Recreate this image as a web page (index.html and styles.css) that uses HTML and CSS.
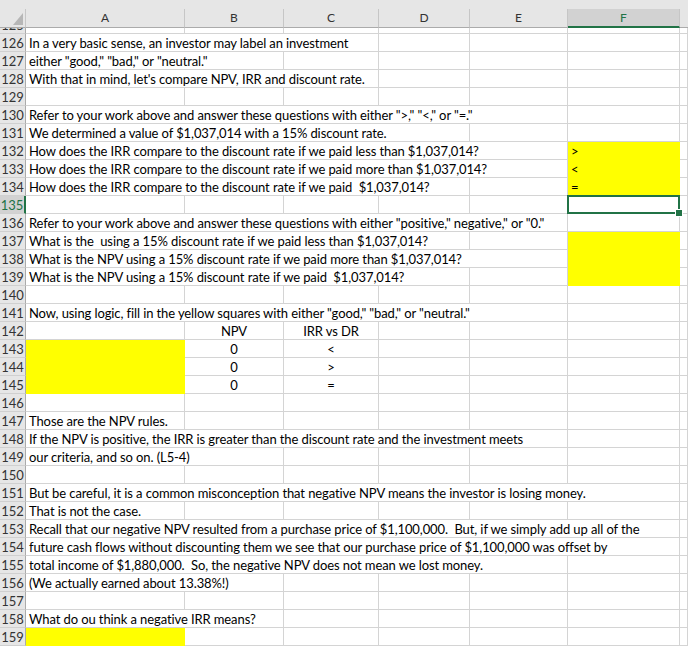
FILE: index.html
```html
<!DOCTYPE html>
<html>
<head>
<meta charset="utf-8">
<link rel="stylesheet" href="styles.css">
</head>
<body>
<div class="sheet">
  <div class="topband"></div>
  <div class="hdr">
    <div class="corner"><svg class="tri" width="10" height="12" viewBox="0 0 10 12"><polygon points="10,0 10,12 0,12" fill="#b6b6b6"/></svg></div>
    <div class="ch">A</div><div class="ch">B</div><div class="ch">C</div><div class="ch">D</div><div class="ch">E</div><div class="ch sel">F</div><div class="ch rest"></div>
  </div>
  <div class="rows">
    <div class="row first"><div class="rn">125</div><div class="c"></div><div class="c"></div><div class="c"></div><div class="c"></div><div class="c"></div><div class="c"></div><div class="c"></div></div>
    <div class="row"><div class="rn">126</div><div class="c s3">In a very basic sense, an investor may label an investment</div><div class="c"></div><div class="c"></div><div class="c"></div><div class="c"></div></div>
    <div class="row"><div class="rn">127</div><div class="c s2">either "good," "bad," or "neutral."</div><div class="c"></div><div class="c"></div><div class="c"></div><div class="c"></div><div class="c"></div></div>
    <div class="row"><div class="rn">128</div><div class="c s3">With that in mind, let's compare NPV, IRR and discount rate.</div><div class="c"></div><div class="c"></div><div class="c"></div><div class="c"></div></div>
    <div class="row"><div class="rn">129</div><div class="c"></div><div class="c"></div><div class="c"></div><div class="c"></div><div class="c"></div><div class="c"></div><div class="c"></div></div>
    <div class="row"><div class="rn">130</div><div class="c s5">Refer to your work above and answer these questions with either "&gt;," "&lt;," or "=."</div><div class="c"></div><div class="c"></div></div>
    <div class="row"><div class="rn">131</div><div class="c s4">We determined a value of $1,037,014 with a 15% discount rate.</div><div class="c"></div><div class="c"></div><div class="c"></div></div>
    <div class="row"><div class="rn">132</div><div class="c s5">How does the IRR compare to the discount rate if we paid less than $1,037,014?</div><div class="c y">&gt;</div><div class="c"></div></div>
    <div class="row"><div class="rn">133</div><div class="c s5">How does the IRR compare to the discount rate if we paid more than $1,037,014?</div><div class="c y">&lt;</div><div class="c"></div></div>
    <div class="row"><div class="rn">134</div><div class="c s4">How does the IRR compare to the discount rate if we paid&nbsp; $1,037,014?</div><div class="c"></div><div class="c y">=</div><div class="c"></div></div>
    <div class="row"><div class="rn cur">135</div><div class="c"></div><div class="c"></div><div class="c"></div><div class="c"></div><div class="c"></div><div class="c active"><span class="selbox"></span><span class="handle"></span></div><div class="c"></div></div>
    <div class="row"><div class="rn">136</div><div class="c s5">Refer to your work above and answer these questions with either "positive," negative," or "0."</div><div class="c"></div><div class="c"></div></div>
    <div class="row"><div class="rn">137</div><div class="c s4">What is the&nbsp; using a 15% discount rate if we paid less than $1,037,014?</div><div class="c"></div><div class="c y"></div><div class="c"></div></div>
    <div class="row"><div class="rn">138</div><div class="c s5">What is the NPV using a 15% discount rate if we paid more than $1,037,014?</div><div class="c y"></div><div class="c"></div></div>
    <div class="row"><div class="rn">139</div><div class="c s4">What is the NPV using a 15% discount rate if we paid&nbsp; $1,037,014?</div><div class="c"></div><div class="c y"></div><div class="c"></div></div>
    <div class="row"><div class="rn">140</div><div class="c"></div><div class="c"></div><div class="c"></div><div class="c"></div><div class="c"></div><div class="c"></div><div class="c"></div></div>
    <div class="row"><div class="rn">141</div><div class="c s5">Now, using logic, fill in the yellow squares with either "good," "bad," or "neutral."</div><div class="c"></div><div class="c"></div></div>
    <div class="row"><div class="rn">142</div><div class="c"></div><div class="c ctr">NPV</div><div class="c ctr">IRR vs DR</div><div class="c"></div><div class="c"></div><div class="c"></div><div class="c"></div></div>
    <div class="row"><div class="rn">143</div><div class="c y"></div><div class="c ctr">0</div><div class="c ctr">&lt;</div><div class="c"></div><div class="c"></div><div class="c"></div><div class="c"></div></div>
    <div class="row"><div class="rn">144</div><div class="c y"></div><div class="c ctr">0</div><div class="c ctr">&gt;</div><div class="c"></div><div class="c"></div><div class="c"></div><div class="c"></div></div>
    <div class="row"><div class="rn">145</div><div class="c y"></div><div class="c ctr">0</div><div class="c ctr">=</div><div class="c"></div><div class="c"></div><div class="c"></div><div class="c"></div></div>
    <div class="row"><div class="rn">146</div><div class="c"></div><div class="c"></div><div class="c"></div><div class="c"></div><div class="c"></div><div class="c"></div><div class="c"></div></div>
    <div class="row"><div class="rn">147</div><div class="c">Those are the NPV rules.</div><div class="c"></div><div class="c"></div><div class="c"></div><div class="c"></div><div class="c"></div><div class="c"></div></div>
    <div class="row"><div class="rn">148</div><div class="c s5">If the NPV is positive, the IRR is greater than the discount rate and the investment meets</div><div class="c"></div><div class="c"></div></div>
    <div class="row"><div class="rn">149</div><div class="c s2">our criteria, and so on. (L5-4)</div><div class="c"></div><div class="c"></div><div class="c"></div><div class="c"></div><div class="c"></div></div>
    <div class="row"><div class="rn">150</div><div class="c"></div><div class="c"></div><div class="c"></div><div class="c"></div><div class="c"></div><div class="c"></div><div class="c"></div></div>
    <div class="row"><div class="rn">151</div><div class="c s6">But be careful, it is a common misconception that negative NPV means the investor is losing money.</div><div class="c"></div></div>
    <div class="row"><div class="rn">152</div><div class="c">That is not the case.</div><div class="c"></div><div class="c"></div><div class="c"></div><div class="c"></div><div class="c"></div><div class="c"></div></div>
    <div class="row"><div class="rn">153</div><div class="c s6">Recall that our negative NPV resulted from a purchase price of $1,100,000.&nbsp; But, if we simply add up all of the</div><div class="c"></div></div>
    <div class="row"><div class="rn">154</div><div class="c s6">future cash flows without discounting them we see that our purchase price of $1,100,000 was offset by</div><div class="c"></div></div>
    <div class="row"><div class="rn">155</div><div class="c s5">total income of $1,880,000.&nbsp; So, the negative NPV does not mean we lost money.</div><div class="c"></div><div class="c"></div></div>
    <div class="row"><div class="rn">156</div><div class="c s2">(We actually earned about 13.38%!)</div><div class="c"></div><div class="c"></div><div class="c"></div><div class="c"></div><div class="c"></div></div>
    <div class="row"><div class="rn">157</div><div class="c"></div><div class="c"></div><div class="c"></div><div class="c"></div><div class="c"></div><div class="c"></div><div class="c"></div></div>
    <div class="row"><div class="rn">158</div><div class="c s2">What do ou think a negative IRR means?</div><div class="c"></div><div class="c"></div><div class="c"></div><div class="c"></div><div class="c"></div></div>
    <div class="row"><div class="rn">159</div><div class="c y"></div><div class="c"></div><div class="c"></div><div class="c"></div><div class="c"></div><div class="c"></div><div class="c"></div></div>
  </div>
</div>
</body>
</html>
```

FILE: styles.css
```css
html, body {
  margin: 0;
  padding: 0;
  background: #ffffff;
}
body {
  font-family: Lato, "Liberation Sans", sans-serif;
  color: #000000;
}
.sheet {
  width: 688px;
  height: 646px;
  overflow: hidden;
  display: flex;
  flex-direction: column;
}
.topband {
  height: 9px;
  flex: none;
  background: #e6e6e6;
}
.hdr {
  flex: none;
  display: grid;
  grid-template-columns: 26px 159px 99px 95px 91px 98px 112px 1fr;
  height: 18px;
  background: #e6e6e6;
  position: relative;
  z-index: 2;
}
.corner {
  box-sizing: border-box;
  border-right: 1px solid #c6c6c6;
  border-bottom: 1px solid #ababab;
  display: flex;
  justify-content: flex-end;
  align-items: flex-end;
  padding: 0 2px 2px 0;
}
.ch {
  box-sizing: border-box;
  border-right: 1px solid #c6c6c6;
  border-bottom: 1px solid #ababab;
  text-align: center;
  font-size: 12px;
  line-height: 17px;
  color: #333333;
}
.ch.sel {
  background: #d2d2d2;
  border-bottom: 2px solid #217346;
  color: #217346;
}
.ch.rest {
  border-right: none;
}
.rows {
  flex: 1;
  overflow: hidden;
}
.row {
  display: grid;
  grid-template-columns: 26px 159px 99px 95px 91px 98px 112px 1fr;
  height: 18px;
}
.row.first {
  margin-top: -11px;
}
.rn {
  box-sizing: border-box;
  background: #e6e6e6;
  border-right: 1px solid #ababab;
  border-bottom: 1px solid #d0d0d0;
  text-align: center;
  font-size: 13px;
  line-height: 15px;
  padding-top: 2px;
  color: #333333;
}
.rn.cur {
  background: #d2d2d2;
  color: #217346;
  border-right: 2px solid #217346;
}
.c {
  box-sizing: border-box;
  border-right: 1px solid #d4d4d4;
  border-bottom: 1px solid #d4d4d4;
  font-size: 13px;
  letter-spacing: -0.1px;
  line-height: 15px;
  padding: 2px 0 0 3px;
  white-space: nowrap;
}
.c.ctr {
  text-align: center;
  padding-left: 0;
}
.c.y {
  background: #ffff00;
  border-color: transparent;
}
.s2 { grid-column: span 2; }
.s3 { grid-column: span 3; }
.s4 { grid-column: span 4; }
.s5 { grid-column: span 5; }
.s6 { grid-column: span 6; }
.c.active {
  position: relative;
}
.selbox {
  position: absolute;
  left: -1px;
  top: -1px;
  right: -1px;
  bottom: -1px;
  border: 2px solid #217346;
}
.handle {
  position: absolute;
  right: -4px;
  bottom: -4px;
  width: 6px;
  height: 6px;
  background: #217346;
  border: 1px solid #ffffff;
  z-index: 3;
}
```
